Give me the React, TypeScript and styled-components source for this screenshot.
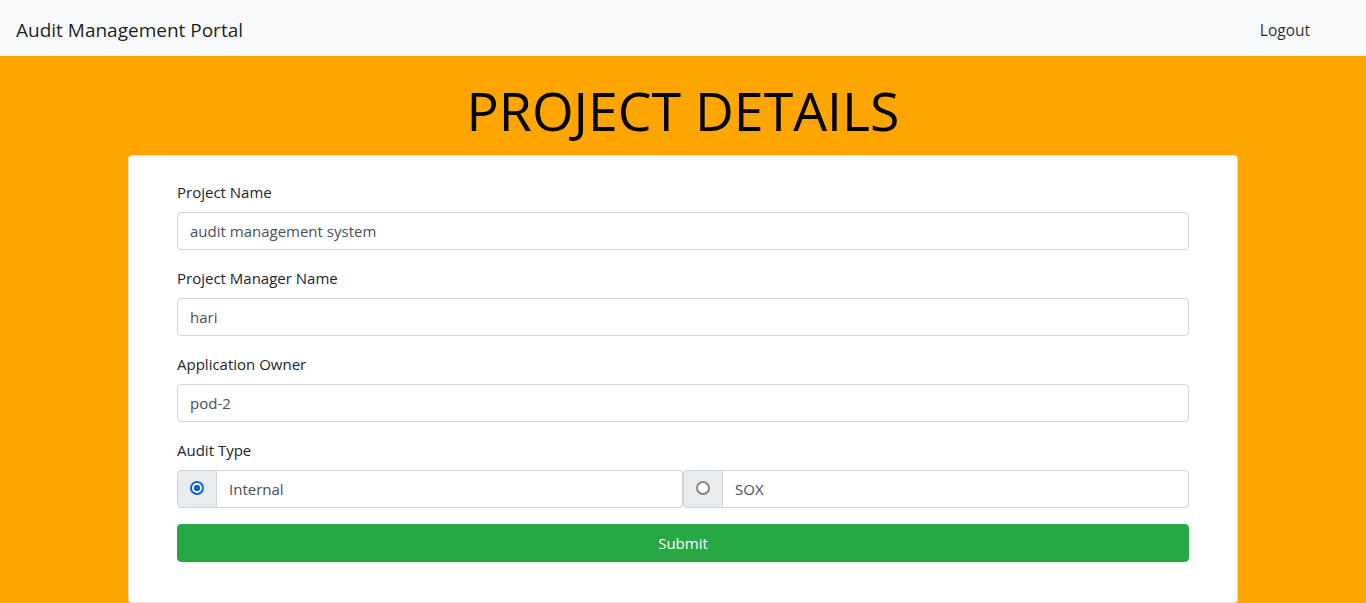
import React, { useState } from 'react';
import styled, { createGlobalStyle } from 'styled-components';

const GlobalStyle = createGlobalStyle`
    * {
        box-sizing: border-box;
    }

    body {
        margin: 0;
        font-family: 'Open Sans', 'Liberation Sans', sans-serif;
        font-size: 16px;
        color: #212529;
        background: #ffa500;
    }
`;

const Navbar = styled.nav`
    height: 56px;
    background: #f8f9fa;
    display: flex;
    align-items: center;
    justify-content: space-between;
    padding: 3px 48px 0 16px;
`;

const Brand = styled.span`
    font-size: 19px;
    color: rgba(0, 0, 0, 0.9);
`;

const NavLink = styled.a`
    font-size: 15.5px;
    color: rgba(0, 0, 0, 0.85);
    padding: 8px;
    cursor: pointer;
`;

const Title = styled.h1`
    margin: 0;
    padding: 21px 0 11px 0;
    text-align: center;
    font-size: 53.6px;
    font-weight: 400;
    line-height: 67px;
    color: #000;
`;

const Card = styled.div`
    width: 1110px;
    margin: 0 auto;
    background: #fff;
    border: 1px solid rgba(0, 0, 0, 0.125);
    border-radius: 4px;
    padding: 24px 48px 40px 48px;
`;

const Group = styled.div`
    margin-bottom: 16px;
`;

const Label = styled.label`
    display: block;
    font-size: 15px;
    line-height: 24px;
    margin-bottom: 8px;
    color: #212529;
`;

const Input = styled.input`
    display: block;
    width: 100%;
    height: 38px;
    padding: 6px 12px;
    font-family: inherit;
    font-size: 15px;
    color: #495057;
    background: #fff;
    border: 1px solid #ced4da;
    border-radius: 4px;
    outline: none;
`;

const RadioRow = styled.div`
    display: flex;
`;

const InputGroup = styled.div`
    flex: 1;
    display: flex;
    height: 38px;
`;

const Prepend = styled.div`
    width: 40px;
    display: flex;
    align-items: center;
    justify-content: center;
    background: #e9ecef;
    border: 1px solid #ced4da;
    border-radius: 4px 0 0 4px;
`;

const Radio = styled.input`
    appearance: none;
    margin: 0 0 2px 0;
    width: 14px;
    height: 14px;
    border-radius: 50%;
    border: 2px solid #858585;
    background: #fff;
    cursor: pointer;

    &:checked {
        border-color: #0b62d6;
        background: radial-gradient(circle, #0b62d6 0 3px, #fff 3.5px);
    }
`;

const GroupText = styled.div`
    flex: 1;
    display: flex;
    align-items: center;
    padding: 0 12px;
    font-size: 15px;
    color: #495057;
    border: 1px solid #ced4da;
    border-left: none;
    border-radius: 0 4px 4px 0;
`;

const SubmitButton = styled.button`
    display: block;
    width: 100%;
    height: 38px;
    font-family: inherit;
    font-size: 15px;
    color: #fff;
    background: #28a745;
    border: 1px solid #28a745;
    border-radius: 4px;
    cursor: pointer;
`;

function App() {
    const [auditType, setAuditType] = useState('Internal');

    return (
        <>
            <GlobalStyle />
            <Navbar>
                <Brand>Audit Management Portal</Brand>
                <NavLink>Logout</NavLink>
            </Navbar>
            <Title>PROJECT DETAILS</Title>
            <Card>
                <Group>
                    <Label>Project Name</Label>
                    <Input defaultValue="audit management system" />
                </Group>
                <Group>
                    <Label>Project Manager Name</Label>
                    <Input defaultValue="hari" />
                </Group>
                <Group>
                    <Label>Application Owner</Label>
                    <Input defaultValue="pod-2" />
                </Group>
                <Group>
                    <Label>Audit Type</Label>
                    <RadioRow>
                        {['Internal', 'SOX'].map((type) => (
                            <InputGroup key={type}>
                                <Prepend>
                                    <Radio
                                        type="radio"
                                        name="auditType"
                                        checked={auditType === type}
                                        onChange={() => setAuditType(type)}
                                    />
                                </Prepend>
                                <GroupText>{type}</GroupText>
                            </InputGroup>
                        ))}
                    </RadioRow>
                </Group>
                <SubmitButton>Submit</SubmitButton>
            </Card>
        </>
    );
}

export default App;
